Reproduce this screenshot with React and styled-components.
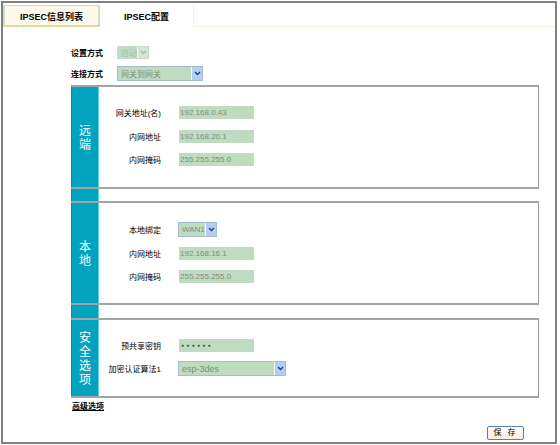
import React from 'react';
import styled, { createGlobalStyle } from 'styled-components';

const FONT = `"Liberation Sans", "Noto Sans CJK SC", sans-serif`;

const Global = createGlobalStyle`
  html, body { margin: 0; padding: 0; background: #fff; }
  body { font-family: ${FONT}; }
`;

const Page = styled.div`
  width: 560px;
  height: 445px;
  padding: 1px 0 0 1px;
  box-sizing: border-box;
  background: #fff;
`;

const Frame = styled.div`
  width: 556px;
  height: 443px;
  box-sizing: border-box;
  border: 2px solid #808080;
  display: flex;
  flex-direction: column;
`;

const TabBar = styled.div`
  display: flex;
  height: 22px;
  margin-top: 2px;
`;

const Tab = styled.div`
  box-sizing: border-box;
  width: ${p => p.$w}px;
  display: flex;
  align-items: center;
  justify-content: center;
  font-size: 9px;
  font-weight: bold;
  color: #000;
  background: ${p => (p.$active ? '#fff' : '#fdf9ec')};
  border-top: 1px solid ${p => (p.$active ? '#fff' : '#c8e0c0')};
  border-left: ${p => (p.$active ? '1px' : '2px')} solid #c8e0c0;
  border-right: 1px solid ${p => (p.$active ? '#f6f0dc' : '#d0e4c8')};
  border-bottom: ${p => (p.$active ? 'none' : '2px solid #e2dc9c')};
  padding-top: ${p => (p.$active ? '0' : '1px')};
`;

const TabFiller = styled.div`
  flex: 1;
  border-bottom: 1px solid #f8f2dc;
`;

const TopForm = styled.div`
  padding: 19px 0 0 68px;
  display: flex;
  flex-direction: column;
  gap: 7px;
`;

const TopRow = styled.div`
  display: flex;
  align-items: center;
  height: ${p => p.$h}px;
`;

const TopLabel = styled.div`
  width: 46px;
  font-size: 8px;
  font-weight: bold;
  color: #000;
`;

const SelectBox = styled.div`
  display: flex;
  box-sizing: border-box;
  width: ${p => p.$w}px;
  height: ${p => p.$h}px;
  border: 1px solid ${p => (p.$disabled ? '#c8dcc8' : '#a4bcd4')};
  background: #c0dcc0;
`;

const SelectValue = styled.div`
  flex: 1;
  display: flex;
  align-items: center;
  padding-left: 3px;
  font-size: ${p => p.$fs || 8}px;
  color: ${p => (p.$disabled ? '#a8c0a8' : '#7c8c7c')};
  white-space: nowrap;
  overflow: hidden;
`;

const ArrowBtn = styled.div`
  width: 10px;
  display: flex;
  align-items: center;
  justify-content: center;
  border-left: 1px solid #f4f8fc;
  background: ${p => (p.$disabled ? '#d2e6d2' : '#b2cff2')};
`;

const Sections = styled.div`
  margin: 4px 0 0 68px;
  width: 468px;
  display: flex;
  flex-direction: column;
`;

const Section = styled.div`
  display: flex;
  box-sizing: border-box;
  height: ${p => p.$h}px;
  border-top: 2px solid #a4a4a4;
  border-bottom: 2px solid #a4a4a4;
  border-right: 1px solid #989898;
`;

const SideBar = styled.div`
  width: 28px;
  box-sizing: border-box;
  background: #02a3bf;
  border-left: 1px solid #0a8ea6;
  border-right: 1px solid #5ccfe0;
  display: flex;
  align-items: center;
  justify-content: center;
`;

const SideText = styled.div`
  width: 12px;
  font-family: "Noto Sans CJK SC", sans-serif;
  font-size: 12px;
  line-height: 14px;
  color: #fff;
  text-align: center;
`;

const GapRow = styled.div`
  height: ${p => p.$h}px;
  display: flex;
`;

const Body = styled.div`
  flex: 1;
  display: grid;
  grid-template-columns: 62px auto;
  column-gap: 17px;
  row-gap: ${p => p.$gap}px;
  align-content: start;
  align-items: center;
  justify-items: start;
  padding-top: 19px;
`;

const FieldLabel = styled.div`
  justify-self: end;
  font-size: 8px;
  color: #000;
  white-space: nowrap;
`;

const Field = styled.div`
  box-sizing: border-box;
  width: 75px;
  height: 13px;
  margin-left: 1px;
  padding-left: ${p => (p.$secret ? '2px' : '1px')};
  background: #c0dcc0;
  font-size: ${p => (p.$secret ? '5px' : '8px')};
  line-height: 13px;
  color: ${p => (p.$secret ? '#4a524a' : '#808a80')};
  letter-spacing: ${p => (p.$secret ? '2.3px' : '0')};
`;

const AdvLink = styled.a`
  margin: 4px 0 0 69px;
  align-self: flex-start;
  font-size: 8px;
  line-height: 10px;
  font-weight: bold;
  color: #000;
  text-decoration: underline;
  cursor: pointer;
`;

const ButtonRow = styled.div`
  margin-top: auto;
  display: flex;
  justify-content: flex-end;
  padding: 0 31px 2px 0;
`;

const SaveButton = styled.button`
  width: 37px;
  height: 14px;
  box-sizing: border-box;
  padding: 0;
  border: 1px solid #5a7fa8;
  border-radius: 2px;
  background: linear-gradient(#ffffff, #f3efe2);
  font-family: ${FONT};
  font-size: 8px;
  line-height: 12px;
  color: #000;
  letter-spacing: 2px;
`;

const Chevron = ({ color }) => (
  <svg width="7" height="5" viewBox="0 0 7 5">
    <path d="M1 1 L3.5 3.6 L6 1" stroke={color} strokeWidth="1.4" fill="none" />
  </svg>
);

const Select = ({ w, h, value, disabled, fs }) => (
  <SelectBox $w={w} $h={h} $disabled={disabled}>
    <SelectValue $disabled={disabled} $fs={fs}>{value}</SelectValue>
    <ArrowBtn $disabled={disabled}>
      <Chevron color={disabled ? '#a8bca8' : '#2c3f78'} />
    </ArrowBtn>
  </SelectBox>
);

const Panel = ({ h, title, gap, children }) => (
  <Section $h={h}>
    <SideBar>
      <SideText>{title}</SideText>
    </SideBar>
    <Body $gap={gap}>{children}</Body>
  </Section>
);

const Gap = ({ h }) => (
  <GapRow $h={h}>
    <SideBar />
  </GapRow>
);

export default function App() {
  return (
    <>
      <Global />
      <Page>
        <Frame>
          <TabBar>
            <Tab $w={96}>IPSEC信息列表</Tab>
            <Tab $w={95} $active>IPSEC配置</Tab>
            <TabFiller />
          </TabBar>

          <TopForm>
            <TopRow $h={13}>
              <TopLabel>设置方式</TopLabel>
              <Select w={32} h={13} value="自动" disabled />
            </TopRow>
            <TopRow $h={15}>
              <TopLabel>连接方式</TopLabel>
              <Select w={86} h={15} value="网关到网关" />
            </TopRow>
          </TopForm>

          <Sections>
            <Panel h={104} title="远端" gap={10.5}>
              <FieldLabel>网关地址(名)</FieldLabel>
              <Field>192.168.0.43</Field>
              <FieldLabel>内网地址</FieldLabel>
              <Field>192.168.20.1</Field>
              <FieldLabel>内网掩码</FieldLabel>
              <Field>255.255.255.0</Field>
            </Panel>
            <Gap h={12} />
            <Panel h={104} title="本地" gap={10}>
              <FieldLabel>本地绑定</FieldLabel>
              <Select w={39} h={15} value="WAN1" />
              <FieldLabel>内网地址</FieldLabel>
              <Field>192.168.16.1</Field>
              <FieldLabel>内网掩码</FieldLabel>
              <Field>255.255.255.0</Field>
            </Panel>
            <Gap h={13} />
            <Panel h={80} title="安全选项" gap={9}>
              <FieldLabel>预共享密钥</FieldLabel>
              <Field $secret>●●●●●●</Field>
              <FieldLabel>加密认证算法1</FieldLabel>
              <Select w={108} h={15} value="esp-3des" fs={9} />
            </Panel>
          </Sections>

          <AdvLink>高级选项</AdvLink>

          <ButtonRow>
            <SaveButton>保 存</SaveButton>
          </ButtonRow>
        </Frame>
      </Page>
    </>
  );
}
